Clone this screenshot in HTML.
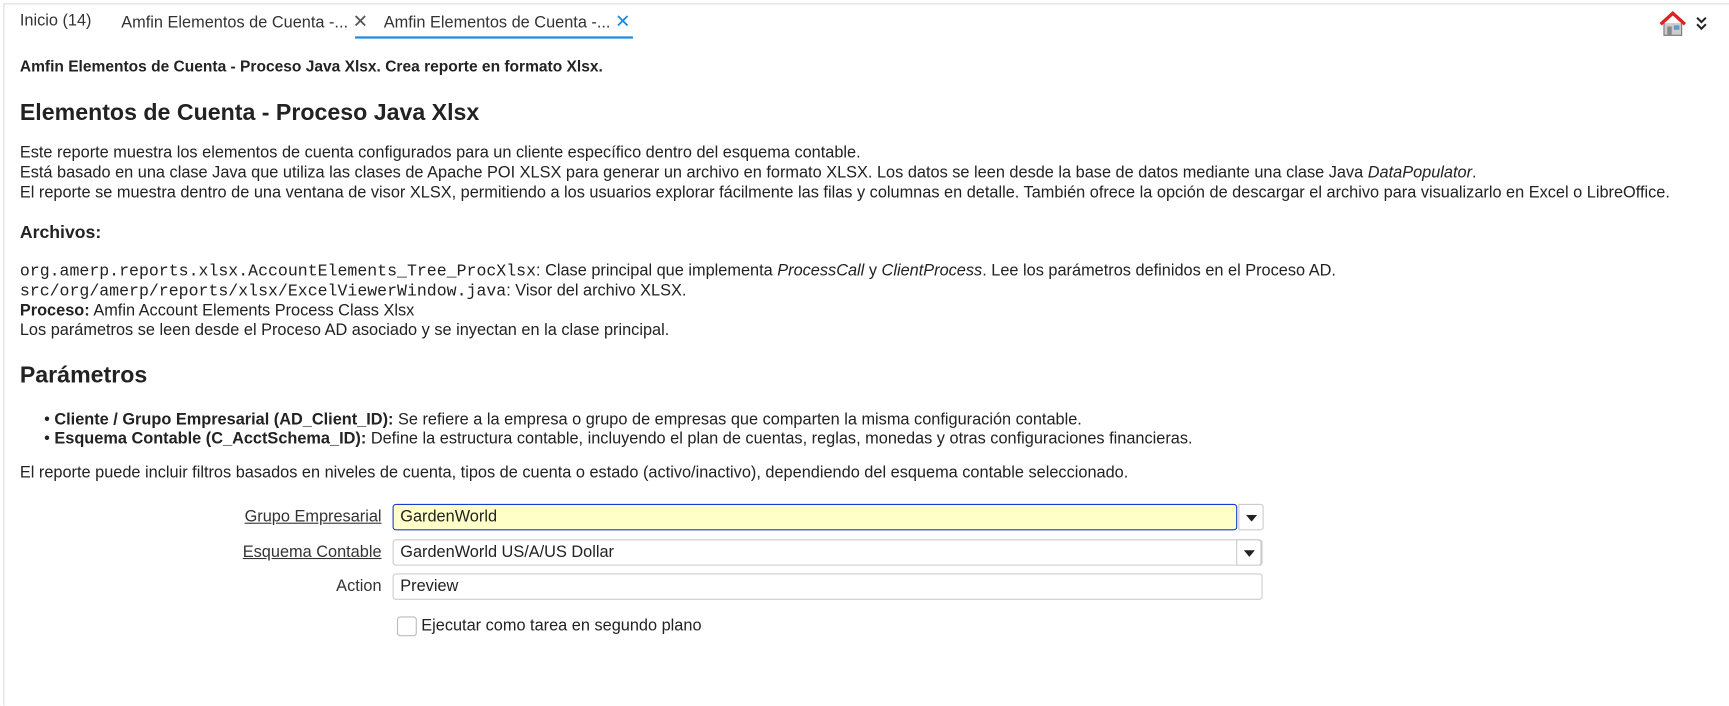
<!DOCTYPE html>
<html><head><meta charset="utf-8"><style>
*{box-sizing:border-box}
body{margin:0;width:1729px;height:705px;overflow:hidden;background:#fff;font-family:"Liberation Sans",sans-serif;color:#222;font-size:14.8px;position:relative}
#w{position:absolute;left:0;top:0;width:1568px;height:640px;transform:scale(1.1027);transform-origin:0 0}
.frame{position:absolute;left:3px;top:3px;right:0;bottom:0;border-top:1px solid #ddd;border-left:1px solid #ddd}
.a{position:absolute;white-space:nowrap;line-height:18px}
.tab{position:absolute;top:10px;font-size:14.8px;color:#333}
.mono{font-family:"Liberation Mono",monospace;font-size:15px;line-height:16px}
.lbl{position:absolute;text-align:right;right:1222px;text-decoration:underline;color:#333}
.inp{position:absolute;left:356px;width:789px;height:24px;border:1px solid #ccc;border-radius:3px;padding:3px 6px;font-size:14.8px;line-height:16px;background:#fff}
.dd{position:absolute;right:0;top:-1px;width:23px;height:24px;border:1px solid #ccc;border-radius:0 3px 3px 0;background:#fff}
.dd:after{content:"";position:absolute;left:6px;top:9px;border-left:5px solid transparent;border-right:5px solid transparent;border-top:6px solid #222}
</style></head><body><div id="w">
<div class="frame"></div>
<div class="tab" style="left:18px;top:11px">Inicio (14)</div>
<div class="tab" style="left:110px">Amfin Elementos de Cuenta -... <span style="color:#555;font-size:17px">✕</span></div>
<div class="tab" style="left:348px">Amfin Elementos de Cuenta -... <span style="color:#1a8be0;font-size:17px">✕</span></div>
<div style="position:absolute;left:322px;top:33px;width:252px;height:2px;background:#1a8be0"></div>
<svg style="position:absolute;left:1505px;top:10px" width="24" height="24" viewBox="0 0 24 24"><path d="M4 11v11h16V11" fill="#ccc" stroke="#777"/><rect x="7" y="14" width="4" height="8" fill="#888"/><rect x="13" y="13" width="5" height="4" fill="#69c"/><path d="M1 12L12 2l11 10" fill="none" stroke="#d22" stroke-width="3"/></svg>
<svg style="position:absolute;left:1537px;top:14px" width="12" height="14" viewBox="0 0 12 14"><path d="M2 2l4 4 4-4M2 8l4 4 4-4" fill="none" stroke="#222" stroke-width="1.8"/></svg>
<div class="a" style="left:18px;top:51px;font-weight:bold;font-size:14.1px">Amfin Elementos de Cuenta - Proceso Java Xlsx. Crea reporte en formato Xlsx.</div>
<div class="a" style="left:18px;top:90px;font-weight:bold;font-size:21px;line-height:26px">Elementos de Cuenta - Proceso Java Xlsx</div>
<div class="a" style="left:18px;top:130px">Este reporte muestra los elementos de cuenta configurados para un cliente específico dentro del esquema contable.<br>Está basado en una clase Java que utiliza las clases de Apache POI XLSX para generar un archivo en formato XLSX. Los datos se leen desde la base de datos mediante una clase Java <i>DataPopulator</i>.<br>El reporte se muestra dentro de una ventana de visor XLSX, permitiendo a los usuarios explorar fácilmente las filas y columnas en detalle. También ofrece la opción de descargar el archivo para visualizarlo en Excel o LibreOffice.</div>
<div class="a" style="left:18px;top:203px;font-weight:bold;font-size:16px">Archivos:</div>
<div class="a" style="left:18px;top:237px"><span class="mono">org.amerp.reports.xlsx.AccountElements_Tree_ProcXlsx</span>: Clase principal que implementa <i>ProcessCall</i> y <i>ClientProcess</i>. Lee los parámetros definidos en el Proceso AD.<br><span class="mono">src/org/amerp/reports/xlsx/ExcelViewerWindow.java</span>: Visor del archivo XLSX.<br><b>Proceso:</b> Amfin Account Elements Process Class Xlsx<br>Los parámetros se leen desde el Proceso AD asociado y se inyectan en la clase principal.</div>
<div class="a" style="left:18px;top:328px;font-weight:bold;font-size:21px;line-height:26px">Parámetros</div>
<div class="a" style="left:40px;top:373px;line-height:17px">• <b>Cliente / Grupo Empresarial (AD_Client_ID):</b> Se refiere a la empresa o grupo de empresas que comparten la misma configuración contable.<br>• <b>Esquema Contable (C_AcctSchema_ID):</b> Define la estructura contable, incluyendo el plan de cuentas, reglas, monedas y otras configuraciones financieras.</div>
<div class="a" style="left:18px;top:420px">El reporte puede incluir filtros basados en niveles de cuenta, tipos de cuenta o estado (activo/inactivo), dependiendo del esquema contable seleccionado.</div>
<div class="a lbl" style="top:460px">Grupo Empresarial</div>
<div class="inp" style="top:457px;background:#ffffc8;border-color:#1a3ccc;width:766px">GardenWorld</div>
<div class="dd" style="left:1123px;top:457px;right:auto"></div>
<div class="a lbl" style="top:492px">Esquema Contable</div>
<div class="inp" style="top:489px">GardenWorld US/A/US Dollar<div class="dd"></div></div>
<div class="a lbl" style="top:523px;text-decoration:none">Action</div>
<div class="inp" style="top:520px">Preview</div>
<div style="position:absolute;left:360px;top:559px;width:18px;height:18px;border:1px solid #bbb;border-radius:3px"></div>
<div class="a" style="left:382px;top:559px">Ejecutar como tarea en segundo plano</div>
</div></body></html>
